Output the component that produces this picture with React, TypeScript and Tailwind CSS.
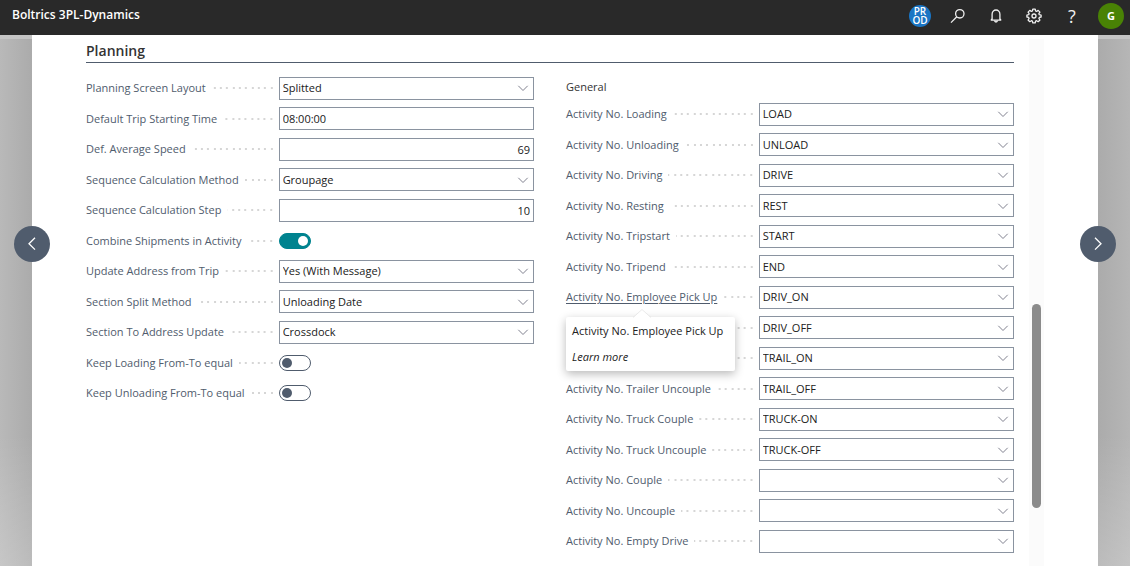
import { useState } from "react";
import type { ReactNode } from "react";

type Field = {
  id: string;
  label: string;
  kind: "select" | "text" | "number" | "toggle";
  value?: string;
  checked?: boolean;
  tip?: boolean;
  covered?: boolean;
};

const PLANNING_FIELDS: Field[] = [
  { id: "layout", label: "Planning Screen Layout", kind: "select", value: "Splitted" },
  { id: "start-time", label: "Default Trip Starting Time", kind: "text", value: "08:00:00" },
  { id: "speed", label: "Def. Average Speed", kind: "number", value: "69" },
  { id: "seq-method", label: "Sequence Calculation Method", kind: "select", value: "Groupage" },
  { id: "seq-step", label: "Sequence Calculation Step", kind: "number", value: "10" },
  { id: "combine", label: "Combine Shipments in Activity", kind: "toggle", checked: true },
  { id: "update-address", label: "Update Address from Trip", kind: "select", value: "Yes (With Message)" },
  { id: "split-method", label: "Section Split Method", kind: "select", value: "Unloading Date" },
  { id: "to-address", label: "Section To Address Update", kind: "select", value: "Crossdock" },
  { id: "keep-loading", label: "Keep Loading From-To equal", kind: "toggle" },
  { id: "keep-unloading", label: "Keep Unloading From-To equal", kind: "toggle" },
];

const GENERAL_FIELDS: Field[] = [
  { id: "loading", label: "Activity No. Loading", kind: "select", value: "LOAD" },
  { id: "unloading", label: "Activity No. Unloading", kind: "select", value: "UNLOAD" },
  { id: "driving", label: "Activity No. Driving", kind: "select", value: "DRIVE" },
  { id: "resting", label: "Activity No. Resting", kind: "select", value: "REST" },
  { id: "tripstart", label: "Activity No. Tripstart", kind: "select", value: "START" },
  { id: "tripend", label: "Activity No. Tripend", kind: "select", value: "END" },
  { id: "pick-up", label: "Activity No. Employee Pick Up", kind: "select", value: "DRIV_ON", tip: true },
  { id: "drop-off", label: "Activity No. Employee Drop Off", kind: "select", value: "DRIV_OFF", covered: true },
  { id: "trailer-couple", label: "Activity No. Trailer Couple", kind: "select", value: "TRAIL_ON", covered: true },
  { id: "trailer-uncouple", label: "Activity No. Trailer Uncouple", kind: "select", value: "TRAIL_OFF" },
  { id: "truck-couple", label: "Activity No. Truck Couple", kind: "select", value: "TRUCK-ON" },
  { id: "truck-uncouple", label: "Activity No. Truck Uncouple", kind: "select", value: "TRUCK-OFF" },
  { id: "couple", label: "Activity No. Couple", kind: "select", value: "" },
  { id: "uncouple", label: "Activity No. Uncouple", kind: "select", value: "" },
  { id: "empty-drive", label: "Activity No. Empty Drive", kind: "select", value: "" },
];

const BOX =
  "block h-[23px] w-full appearance-none border border-[#8a93a0] bg-white px-[3px] text-[11px] leading-4 text-[#212121] outline-none focus:border-[#00838f]";

const Chevron = () => (
  <svg
    viewBox="0 0 12 12"
    className="pointer-events-none absolute top-1/2 right-[5px] h-3 w-3 -translate-y-1/2"
    fill="none"
    stroke="#80818f"
    strokeWidth="1"
  >
    <path d="M1.3 3.8 6 8.5l4.7-4.7" />
  </svg>
);

const Control = ({ field }: { field: Field }) => {
  const [value, setValue] = useState(field.value ?? "");
  const [checked, setChecked] = useState(field.checked ?? false);

  if (field.kind === "toggle") {
    return (
      <input
        id={field.id}
        type="checkbox"
        role="switch"
        checked={checked}
        onChange={(e) => setChecked(e.target.checked)}
        className="flex h-4 w-8 appearance-none items-center rounded-full border border-[#505c6d] bg-white px-0.5 before:block before:size-[10px] before:rounded-full before:bg-[#505c6d] checked:justify-end checked:border-[#00838f] checked:bg-[#00838f] checked:before:bg-white"
      />
    );
  }

  if (field.kind === "select") {
    return (
      <div className="relative">
        <select
          id={field.id}
          aria-label={field.covered ? field.label : undefined}
          value={value}
          onChange={(e) => setValue(e.target.value)}
          className={BOX}
        >
          <option value={field.value}>{field.value}</option>
        </select>
        <Chevron />
      </div>
    );
  }

  return (
    <input
      id={field.id}
      type="text"
      value={value}
      onChange={(e) => setValue(e.target.value)}
      className={field.kind === "number" ? `${BOX} text-right` : BOX}
    />
  );
};

const LabelTip = ({ title }: { title: string }) => (
  <div
    role="tooltip"
    className="absolute top-[35px] left-0 z-10 w-[169px] rounded-xs bg-white px-1.5 py-1.5 text-[11px] leading-4 text-[#212121] shadow-[0_3px_10px_rgba(0,0,0,0.28)]"
  >
    <svg viewBox="0 0 18 9" className="absolute -top-2 left-[67px] h-[9px] w-[18px]" fill="#fff">
      <path d="M0 9 9 0l9 9z" stroke="none" />
      <path d="M0 8.5 9 .5l9 8" fill="none" stroke="#dcdcdc" strokeWidth=".6" />
    </svg>
    <p className="whitespace-nowrap">{title}</p>
    <a href="#learn-more" className="mt-2.5 block italic">
      Learn more
    </a>
  </div>
);

const FieldRow = ({ field }: { field: Field }) => (
  <div className="relative flex items-center odd:h-[30px] even:h-[31px]">
    <div className="flex w-[43%] shrink-0 items-center pr-1.5">
      {/* rows behind the open tooltip are named by aria-label instead */}
      {!field.covered && (
        <label
          htmlFor={field.id}
          className={
            field.tip
              ? "whitespace-nowrap text-[#505c6d] underline underline-offset-2"
              : "whitespace-nowrap text-[#505c6d]"
          }
        >
          {field.label}
        </label>
      )}
      {/* dotted leader */}
      <span className="ml-1.5 h-0.5 flex-1 bg-[linear-gradient(90deg,transparent_4px,#d6d6d6_4px_6px,transparent_6px_10px,#d6d6d6_10px_12px,transparent_12px_17px,#d6d6d6_17px)] bg-[length:19px_2px] bg-right bg-repeat-x" />
    </div>
    <div className="min-w-0 flex-1">
      <Control field={field} />
    </div>
    {field.tip && <LabelTip title={field.label} />}
  </div>
);

const IconButton = ({ label, children }: { label: string; children: ReactNode }) => (
  <button type="button" aria-label={label} className="flex size-[38px] items-center justify-center text-[#f0f0f0]">
    {children}
  </button>
);

const TopBar = () => (
  <header className="flex h-[35px] items-start justify-between bg-[#292929] pr-1.5 pl-3 text-white">
    <h1 className="pt-[7px] text-xs font-semibold">Boltrics 3PL-Dynamics</h1>
    <div className="flex h-[31px] items-center">
      <span className="mr-2 flex size-[22px] items-center justify-center rounded-full bg-[#1a75c4] text-center text-[10px] leading-[9px] font-semibold">
        PR
        <br />
        OD
      </span>
      <IconButton label="Search">
        <svg viewBox="0 0 16 16" className="size-4" fill="none" stroke="currentColor" strokeWidth="1.3">
          <circle cx="9.8" cy="5.8" r="4.2" />
          <path d="M6.8 8.8 1 14.6" />
        </svg>
      </IconButton>
      <IconButton label="Notifications">
        <svg viewBox="0 0 16 16" className="size-4" fill="none" stroke="currentColor" strokeWidth="1.3">
          <path d="M2.8 12.2h10.4M4.1 12V6.2a3.9 4.2 0 0 1 7.8 0V12M3 12.3l1.1-1.8M13 12.3l-1.1-1.8" />
          <path d="M6.6 12.6a1.4 1.4 0 0 0 2.8 0" />
        </svg>
      </IconButton>
      <IconButton label="Settings">
        <svg viewBox="0 0 16 16" className="size-4" fill="none" stroke="currentColor" strokeWidth="1.3" strokeLinejoin="round">
          <path d="M6.8 1.2h2.4l.4 1.8 1 .4 1.6-1 1.7 1.7-1 1.6.4 1 1.8.4v1.9l-1.8.4-.4 1 1 1.6-1.7 1.7-1.6-1-1 .4-.4 1.8H6.8l-.4-1.8-1-.4-1.6 1-1.7-1.7 1-1.6-.4-1-1.8-.4V7.1l1.8-.4.4-1-1-1.6 1.7-1.7 1.6 1 1-.4z" />
          <circle cx="8" cy="8" r="2" />
        </svg>
      </IconButton>
      <IconButton label="Help">
        <span className="text-lg leading-none">?</span>
      </IconButton>
      <button
        type="button"
        className="ml-[7px] flex size-[26px] items-center justify-center rounded-full bg-[#498205] text-[11px] font-bold"
      >
        G
      </button>
    </div>
  </header>
);

const NavArrow = ({ label, d, side }: { label: string; d: string; side: string }) => (
  <button
    type="button"
    aria-label={label}
    className={`absolute top-[187px] z-20 flex size-9 items-center justify-center rounded-full bg-[#505c6d] text-white ${side}`}
  >
    <svg viewBox="0 0 16 16" className="size-4" fill="none" stroke="currentColor" strokeWidth="1.3">
      <path d={d} />
    </svg>
  </button>
);

export default function App() {
  return (
    <div className="flex min-h-screen flex-col font-['Open_Sans','Noto_Sans',sans-serif] text-[11px] leading-4">
      <TopBar />
      <div className="relative flex flex-1 border-t-4 border-[#c4c4c4] bg-[linear-gradient(180deg,transparent_75%,rgba(255,255,255,0.2)),linear-gradient(90deg,#b9b9b9,#ababab_32px,#ababab_calc(100%-32px),#b6b6b6)] px-8">
        <NavArrow label="Previous record" d="M11 1.8 5 7.7l6 5.9" side="left-3.5" />
        <NavArrow label="Next record" d="M5 1.8l6 5.9-6 5.9" side="right-3.5" />

        <main className="-mt-1 flex flex-1 bg-white pr-[54px] pl-[54px]">
          <section className="flex-1 pr-[15px] pb-2">
            <h2 className="border-b border-[#505c6d] pt-1.5 pb-0.5 text-sm leading-[19px] font-semibold text-[#333]">
              Planning
            </h2>
            <div className="grid grid-cols-2 gap-x-8 pt-[10px]">
              <div>
                {PLANNING_FIELDS.map((field) => (
                  <FieldRow key={field.id} field={field} />
                ))}
              </div>
              <div>
                <h3 className="h-[26px] pt-1.5 font-medium text-[#333]">General</h3>
                <div>
                  {GENERAL_FIELDS.map((field) => (
                    <FieldRow key={field.id} field={field} />
                  ))}
                </div>
              </div>
            </div>
          </section>
          {/* scroll track */}
          <div className="mt-1 w-[15px] bg-[#fbfbfb] px-[3px] pt-[265px]">
            <div className="h-[204px] rounded-full bg-[#8b8b8b]" />
          </div>
        </main>
      </div>
    </div>
  );
}
